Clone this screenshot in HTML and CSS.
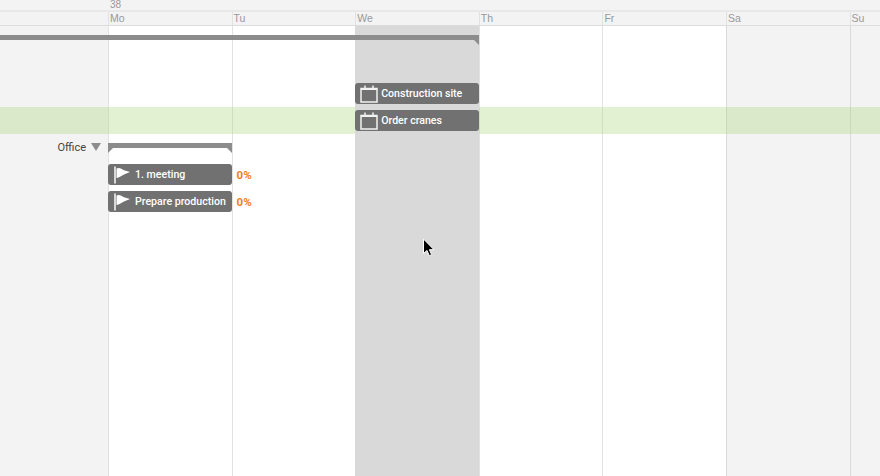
FILE: index.html
```html
<!DOCTYPE html>
<html lang="en">
<head>
  <meta charset="UTF-8" />
  <title>Project plan</title>
  <link rel="stylesheet" href="styles.css">
</head>
<body>
  <div class="gantt">
    <div class="week-row">
      <div class="week-label">38</div>
    </div>
    <div class="day-row timeline">
      <div class="day-cell col-mo">Mo</div>
      <div class="day-cell col-tu">Tu</div>
      <div class="day-cell col-we">We</div>
      <div class="day-cell col-th">Th</div>
      <div class="day-cell col-fr">Fr</div>
      <div class="day-cell col-sa">Sa</div>
      <div class="day-cell col-su">Su</div>
    </div>

    <div class="chart">
      <!-- background columns -->
      <div class="layer timeline">
        <div class="side-col"></div>
        <div class="col col-mo"></div>
        <div class="col col-tu"></div>
        <div class="col col-we"></div>
        <div class="col col-th"></div>
        <div class="col col-fr"></div>
        <div class="col col-sa weekend"></div>
        <div class="col col-su weekend"></div>
      </div>

      <div class="layer band-layer">
        <div class="band"></div>
      </div>

      <div class="layer timeline">
        <div class="selected col-we"></div>
      </div>

      <!-- rows with bars -->
      <div class="layer rows">
        <div class="row timeline">
          <div class="summary summary-top"></div>
        </div>
        <div class="row timeline"></div>
        <div class="row timeline">
          <div class="bar col-we">
            <svg class="bar-icon calendar" viewBox="0 0 20 20" width="20" height="20"><path d="M2 4.500h16V18H2z" fill="none" stroke="#f2f2f2" stroke-width="1.500"/><path d="M2 5h16" stroke="#f2f2f2" stroke-width="2"/><path d="M6 1.500v3M14 1.500v3" stroke="#f2f2f2" stroke-width="1.500"/></svg>
            <span>Construction site</span>
          </div>
        </div>
        <div class="row timeline">
          <div class="bar col-we">
            <svg class="bar-icon calendar" viewBox="0 0 20 20" width="20" height="20"><path d="M2 4.500h16V18H2z" fill="none" stroke="#f2f2f2" stroke-width="1.500"/><path d="M2 5h16" stroke="#f2f2f2" stroke-width="2"/><path d="M6 1.500v3M14 1.500v3" stroke="#f2f2f2" stroke-width="1.500"/></svg>
            <span>Order cranes</span>
          </div>
        </div>
        <div class="row timeline">
          <div class="group-label">Office <span class="caret"></span></div>
          <div class="summary summary-group col-mo"></div>
        </div>
        <div class="row timeline">
          <div class="bar col-mo">
            <svg class="bar-icon flag" viewBox="0 0 20 20" width="20" height="20"><path d="M3 1.500v17" stroke="#d8d8d8" stroke-width="2"/><path d="M4.500 3.500c3-1.500 5 .5 7.500 1.700l6 1.800-6 2.500c-2.500 1-4.500 3-7.500 3.500z" fill="#fff"/></svg>
            <span>1. meeting</span>
          </div>
          <div class="percent col-tu">0%</div>
        </div>
        <div class="row timeline">
          <div class="bar col-mo">
            <svg class="bar-icon flag" viewBox="0 0 20 20" width="20" height="20"><path d="M3 1.500v17" stroke="#d8d8d8" stroke-width="2"/><path d="M4.500 3.500c3-1.500 5 .5 7.500 1.700l6 1.800-6 2.500c-2.500 1-4.500 3-7.500 3.500z" fill="#fff"/></svg>
            <span>Prepare production</span>
          </div>
          <div class="percent col-tu">0%</div>
        </div>
      </div>
    </div>

    <svg class="cursor" viewBox="0 0 14 20" width="14" height="20"><path d="M1.500 1v14.500l3.500-3 2.300 5.200 2.400-1-2.300-5h4.600z" fill="#000" stroke="#fff" stroke-width="1"/></svg>
  </div>
</body>
</html>
```

FILE: styles.css
```css
:root {
  --side-bg: #f3f3f3;
  --line: #e2e2e2;
  --bar: #717171;
  --label: #999999;
  --selected: #d9d9d9;
  --orange: #f07f1b;
}
html, body {
  margin: 0;
  height: 100%;
  overflow: hidden;
}
body {
  font-family: Roboto, 'Liberation Sans', Arial, sans-serif;
  background-color: #ffffff;
}
.gantt {
  position: relative;
  width: 880px;
  height: 476px;
  overflow: hidden;
  display: flex;
  flex-direction: column;
}
.timeline {
  display: grid;
  grid-template-columns: 108px repeat(7, 123.6px);
}
.col-mo { grid-column: 2; }
.col-tu { grid-column: 3; }
.col-we { grid-column: 4; }
.col-th { grid-column: 5; }
.col-fr { grid-column: 6; }
.col-sa { grid-column: 7; }
.col-su { grid-column: 8; }

/* header */
.week-row {
  height: 10px;
  padding-left: 110px;
  background-color: var(--side-bg);
  border-bottom: 2px solid #e8e8e8;
}
.week-label {
  font-family: 'Liberation Sans', Arial, sans-serif;
  font-size: 10px;
  line-height: 9px;
  color: var(--label);
}
.day-row {
  height: 13px;
  background-color: var(--side-bg);
  border-bottom: 1px solid #dddddd;
}
.day-cell {
  font-family: 'Liberation Sans', Arial, sans-serif;
  font-size: 10.500px;
  line-height: 12px;
  color: var(--label);
  padding-left: 1px;
  border-left: 1px solid var(--line);
}

/* chart */
.chart {
  flex: 1;
  display: grid;
  min-height: 0;
}
.layer {
  grid-area: 1 / 1;
  min-height: 0;
}
.side-col { background-color: var(--side-bg); }
.col { border-left: 1px solid var(--line); }
.weekend {
  background-color: var(--side-bg);
  border-left-color: #d9d9d9;
}
.band-layer { padding-top: 81px; }
.band {
  height: 27px;
  background-color: rgba(176, 216, 130, 0.35);
}
.selected {
  background-color: var(--selected);
}
.rows {
  display: flex;
  flex-direction: column;
}
.row {
  height: 27px;
  flex: none;
  align-items: center;
}
.summary {
  position: relative;
  height: 5px;
  margin-bottom: 4px;
  background-color: #8c8c8c;
}
.summary-top {
  grid-column: 1 / span 4;
}
.summary-top::after,
.summary-group::before,
.summary-group::after {
  content: "";
  position: absolute;
  top: 5px;
  border-top: 5px solid #8c8c8c;
}
.summary-top::after,
.summary-group::after {
  right: 0;
  border-left: 5px solid transparent;
}
.summary-group::before {
  left: 0;
  border-right: 5px solid transparent;
}
.group-label {
  grid-column: 1;
  font-size: 11px;
  color: #444444;
  padding-right: 7px;
  margin-bottom: 1px;
  display: flex;
  justify-content: flex-end;
  align-items: center;
  gap: 5px;
}
.caret {
  width: 0;
  height: 0;
  border-left: 5px solid transparent;
  border-right: 5px solid transparent;
  border-top: 8px solid #8c8c8c;
}
.bar {
  height: 21px;
  background-color: var(--bar);
  border-radius: 3px;
  color: #ffffff;
  font-size: 10.600px;
  font-weight: 500;
  display: flex;
  align-items: center;
  gap: 3px;
  padding-left: 3px;
  white-space: nowrap;
  overflow: hidden;
}
.bar-icon { flex: none; }
.calendar { margin-left: 1px; }
.calendar + span { margin-left: -1px; }
.flag { margin-left: 1px; }
.percent {
  color: var(--orange);
  font-size: 11.500px;
  font-weight: 700;
  padding-left: 5px;
  margin-top: 1px;
}
.cursor {
  position: absolute;
  left: 422px;
  top: 238px;
}
```
